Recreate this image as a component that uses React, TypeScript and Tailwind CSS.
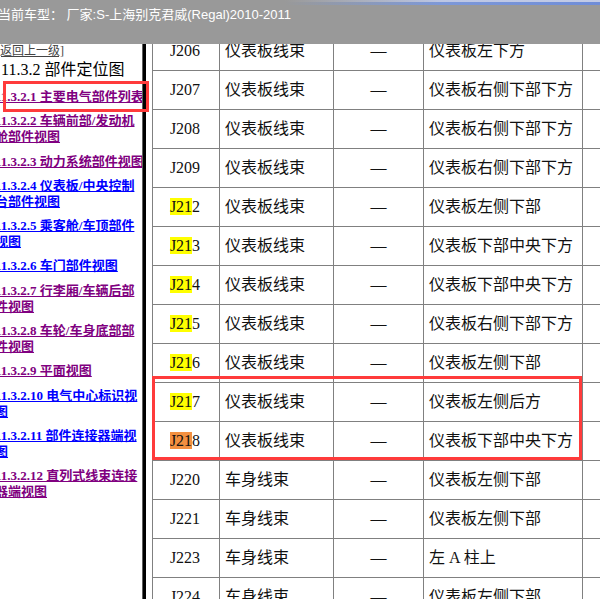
import React from "react";

type Row = { id: string; hl?: "y" | "o"; harness: string; loc: string };

const rows: Row[] = [
  { id: "J206", harness: "仪表板线束", loc: "仪表板左下方" },
  { id: "J207", harness: "仪表板线束", loc: "仪表板右侧下部下方" },
  { id: "J208", harness: "仪表板线束", loc: "仪表板右侧下部下方" },
  { id: "J209", harness: "仪表板线束", loc: "仪表板右侧下部下方" },
  { id: "J212", hl: "y", harness: "仪表板线束", loc: "仪表板左侧下部" },
  { id: "J213", hl: "y", harness: "仪表板线束", loc: "仪表板下部中央下方" },
  { id: "J214", hl: "y", harness: "仪表板线束", loc: "仪表板下部中央下方" },
  { id: "J215", hl: "y", harness: "仪表板线束", loc: "仪表板右侧下部下方" },
  { id: "J216", hl: "y", harness: "仪表板线束", loc: "仪表板左侧下部" },
  { id: "J217", hl: "y", harness: "仪表板线束", loc: "仪表板左侧后方" },
  { id: "J218", hl: "o", harness: "仪表板线束", loc: "仪表板下部中央下方" },
  { id: "J220", harness: "车身线束", loc: "仪表板左侧下部" },
  { id: "J221", harness: "车身线束", loc: "仪表板左侧下部" },
  { id: "J223", harness: "车身线束", loc: "左 A 柱上" },
  { id: "J224", harness: "车身线束", loc: "仪表板左侧下部" },
];

type Link = { num: string; lines: string[]; visited: boolean };

const links: Link[] = [
  { num: "11.3.2.1", lines: ["主要电气部件列表"], visited: true },
  { num: "11.3.2.2", lines: ["车辆前部/发动机", "舱部件视图"], visited: true },
  { num: "11.3.2.3", lines: ["动力系统部件视图"], visited: true },
  { num: "11.3.2.4", lines: ["仪表板/中央控制", "台部件视图"], visited: false },
  { num: "11.3.2.5", lines: ["乘客舱/车顶部件", "视图"], visited: false },
  { num: "11.3.2.6", lines: ["车门部件视图"], visited: false },
  { num: "11.3.2.7", lines: ["行李厢/车辆后部", "件视图"], visited: true },
  { num: "11.3.2.8", lines: ["车轮/车身底部部", "件视图"], visited: true },
  { num: "11.3.2.9", lines: ["平面视图"], visited: true },
  { num: "11.3.2.10", lines: ["电气中心标识视", "图"], visited: false },
  { num: "11.3.2.11", lines: ["部件连接器端视", "图"], visited: false },
  { num: "11.3.2.12", lines: ["直列式线束连接", "器端视图"], visited: true },
];

const serif = '"Liberation Serif", "Noto Sans CJK SC", serif';

function IdCell({ r }: { r: Row }) {
  if (!r.hl) return <>{r.id}</>;
  return (
    <>
      <span className={r.hl === "y" ? "bg-[#ffff00]" : "bg-[#f39040]"}>{r.id.slice(0, 3)}</span>
      {r.id.slice(3)}
    </>
  );
}

export default function App() {
  return (
    <div className="relative w-[600px] h-[599px] overflow-hidden bg-white">
      {/* top bar */}
      <div className="relative h-[44px] bg-[#999999] overflow-hidden">
        <div className="absolute top-0 left-[285px] right-0 h-[2px] bg-linear-to-r from-[#999999] via-[#bcc6e4] to-[#c2cbe6]" />
        <div className="absolute top-[2px] left-[285px] right-0 h-[3px] bg-linear-to-r from-[#999999] via-[#7d98d8] to-[#6f8dd8]" />
        <div
          className="pt-[6px] -ml-[2px] text-[13px] leading-[17px] text-white whitespace-nowrap"
          style={{ fontFamily: '"Liberation Sans", "Noto Sans CJK SC", sans-serif' }}
        >
          当前车型： 厂家:S-上海别克君威(Regal)2010-2011
        </div>
      </div>

      <div className="flex h-[555px]">
        {/* left panel */}
        <div className="w-[142px] overflow-hidden" style={{ fontFamily: serif }}>
          <div className="-ml-[4px] text-[12px] leading-[14px] text-[#444] underline whitespace-nowrap">
            [返回上一级]
          </div>
          <div className="mt-[2px] ml-[1px] text-[16px] leading-[20px] text-black whitespace-nowrap">
            11.3.2 部件定位图
          </div>
          <div className="mt-[9px] -ml-[5px]">
            {links.map((l) => (
              <div
                key={l.num}
                className={`mb-[8.3px] text-[13px] leading-[16px] font-bold underline whitespace-nowrap ${
                  l.visited ? "text-[#800080]" : "text-[#0000ff]"
                }`}
              >
                {l.lines.map((ln, i) => (
                  <div key={i}>{i === 0 ? `${l.num} ${ln}` : ln}</div>
                ))}
              </div>
            ))}
          </div>
        </div>

        {/* divider */}
        <div className="w-[1px] bg-[#606060]" />
        <div className="w-[3px] bg-black" />

        {/* table area */}
        <div className="flex-1 overflow-hidden pl-[6px]" style={{ fontFamily: serif }}>
          <div className="-mt-[12px] border-l border-[#808080] text-[16px] text-[#111]">
            {rows.map((r) => (
              <div key={r.id} className="grid grid-cols-[67px_114px_90px_159px_60px] h-[39px]">
                <div className="border-r border-b border-[#808080] flex items-center justify-center pr-[2px]">
                  <span>
                    <IdCell r={r} />
                  </span>
                </div>
                <div className="border-r border-b border-[#808080] flex items-center pl-[5px]">{r.harness}</div>
                <div className="border-r border-b border-[#808080] flex items-center justify-center">—</div>
                <div className="border-r border-b border-[#808080] flex items-center pl-[5px] whitespace-nowrap">
                  {r.loc}
                </div>
                <div className="border-b border-[#808080]" />
              </div>
            ))}
          </div>
        </div>
      </div>

      {/* red annotation boxes */}
      <div className="absolute left-[3px] top-[81px] w-[146px] h-[31px] border-[3px] border-[#ff3b3b]" />
      <div className="absolute left-[152px] top-[376px] w-[430px] h-[84px] border-[3px] border-[#ff3b3b]" />
    </div>
  );
}
